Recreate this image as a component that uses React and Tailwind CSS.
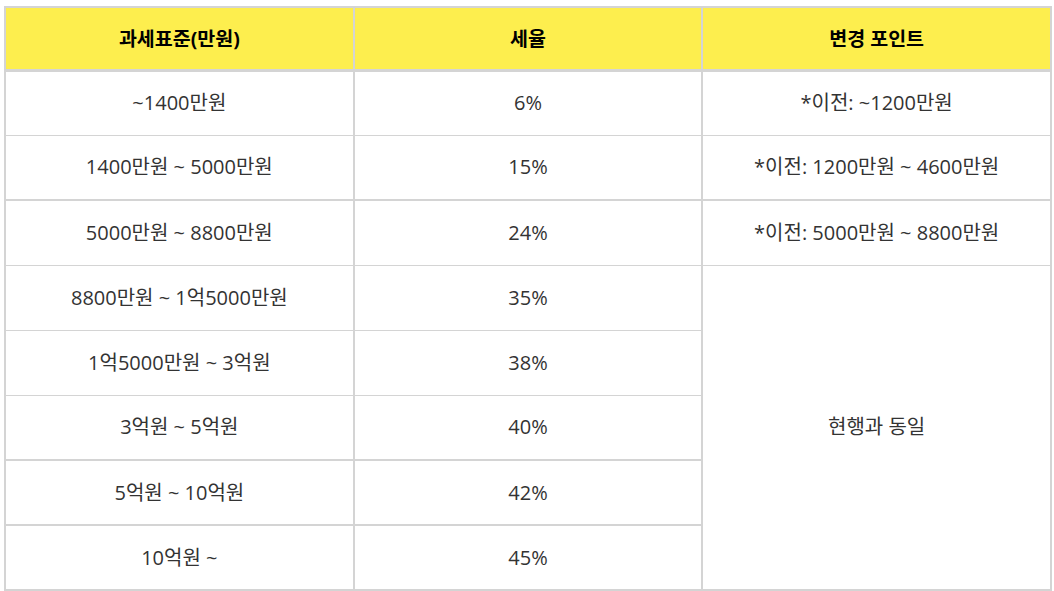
import React from "react";

const rows = [
  { range: "~1400만원", rate: "6%", note: "*이전: ~1200만원", thick: false },
  { range: "1400만원 ~ 5000만원", rate: "15%", note: "*이전: 1200만원 ~ 4600만원", thick: true },
  { range: "5000만원 ~ 8800만원", rate: "24%", note: "*이전: 5000만원 ~ 8800만원", thick: false },
  { range: "8800만원 ~ 1억5000만원", rate: "35%", thick: false },
  { range: "1억5000만원 ~ 3억원", rate: "38%", thick: false },
  { range: "3억원 ~ 5억원", rate: "40%", thick: true },
  { range: "5억원 ~ 10억원", rate: "42%", thick: true },
  { range: "10억원 ~", rate: "45%", thick: true },
];

const App = () => {
  return (
    <div
      className="w-[1054px] h-[591px] bg-white pt-[6px] pl-[4px]"
      style={{ fontFamily: '"Open Sans", "Noto Sans CJK KR", sans-serif' }}
    >
      <table className="w-[1048px] table-fixed border-collapse border-2 border-[#d4d4d4] text-[20px] text-[#333]">
        <thead>
          <tr className="h-[63px] bg-[#fdee4e] border-b-[3px] border-[#d4d4d4] text-[19.5px]">
            <th className="border-r-2 border-[#d4d4d4] font-bold text-black">과세표준(만원)</th>
            <th className="border-r-2 border-[#d4d4d4] font-bold text-black">세율</th>
            <th className="font-bold text-black">변경 포인트</th>
          </tr>
        </thead>
        <tbody>
          {rows.map((r, i) => (
            <tr
              key={i}
              className={
                "h-[65px] border-[#d4d4d4] " +
                (r.thick ? "border-b-2" : "border-b")
              }
            >
              <td className="border-r-2 border-[#d4d4d4] text-center">{r.range}</td>
              <td className="border-r-2 border-[#d4d4d4] text-center">{r.rate}</td>
              {i < 3 && <td className="text-center">{r.note}</td>}
              {i === 3 && (
                <td rowSpan={5} className="text-center">
                  현행과 동일
                </td>
              )}
            </tr>
          ))}
        </tbody>
      </table>
    </div>
  );
};

export default App;
